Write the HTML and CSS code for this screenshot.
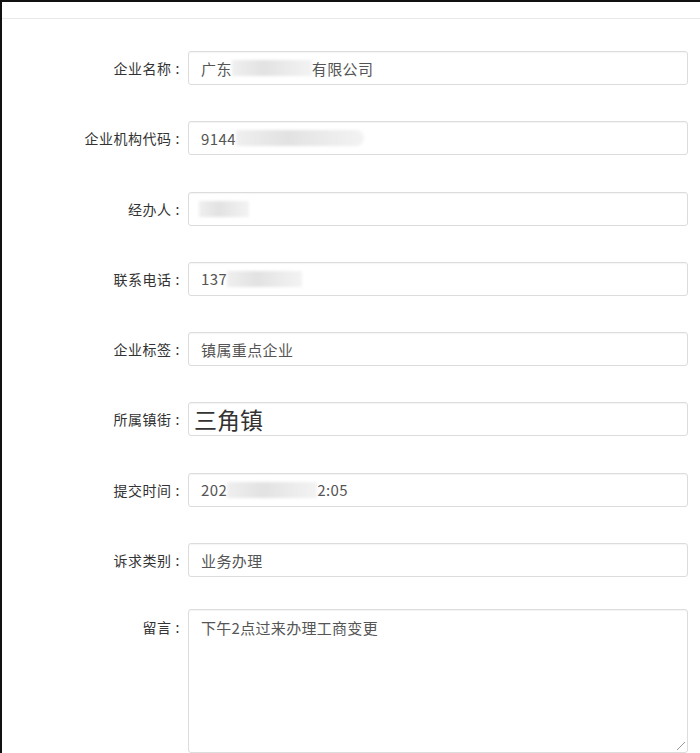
FILE: index.html
```html
<!DOCTYPE html>
<html lang="zh-CN">
<head>
<meta charset="utf-8">
<title>企业信息</title>
<link rel="stylesheet" href="styles.css">
</head>
<body>
<div class="frame">
  <div class="topbar"></div>
  <form class="form">
    <div class="row">
      <label class="label">企业名称</label>
      <div class="control">广东<span class="blur w80"></span>有限公司</div>
    </div>
    <div class="row">
      <label class="label">企业机构代码</label>
      <div class="control">9144<span class="blur w130"></span></div>
    </div>
    <div class="row">
      <label class="label">经办人</label>
      <div class="control"><span class="blur w50 lead"></span></div>
    </div>
    <div class="row">
      <label class="label">联系电话</label>
      <div class="control">137<span class="blur w75"></span></div>
    </div>
    <div class="row">
      <label class="label">企业标签</label>
      <div class="control">镇属重点企业</div>
    </div>
    <div class="row">
      <label class="label">所属镇街</label>
      <div class="control big">三角镇</div>
    </div>
    <div class="row">
      <label class="label">提交时间</label>
      <div class="control">202<span class="blur w90"></span>2:05</div>
    </div>
    <div class="row">
      <label class="label">诉求类别</label>
      <div class="control">业务办理</div>
    </div>
    <div class="row row-area">
      <label class="label">留言</label>
      <div class="control area">下午2点过来办理工商变更<span class="grip"></span></div>
    </div>
  </form>
</div>
</body>
</html>
```
FILE: styles.css
```css
* { box-sizing: border-box; }
html, body { margin: 0; padding: 0; background: #fff; }
body {
  font-family: "Noto Sans CJK SC", "Noto Sans", "Liberation Sans", sans-serif;
  font-size: 14px;
  color: #333;
}
.frame {
  width: 700px;
  height: 753px;
  border-top: 2px solid #111;
  border-left: 2px solid #111;
  overflow: hidden;
}
.topbar {
  height: 17px;
  border-bottom: 1px solid #e8e8e8;
}
.form {
  padding-top: 32px;
}
.row {
  display: flex;
  align-items: center;
  margin-bottom: 36.3px;
}
.row-area {
  margin-top: -4px;
  align-items: flex-start;
}
.label {
  width: 186px;
  text-align: right;
  padding-right: 8px;
  font-size: 14px;
  letter-spacing: 0.5px;
  color: #333;
  line-height: 20px;
}
.label::after {
  content: ":";
  margin-left: 4px;
}
.row-area .label { padding-top: 8px; }
.control {
  position: relative;
  width: 500px;
  height: 34px;
  border: 1px solid #dcdcdc;
  border-radius: 3px;
  box-shadow: inset 0 1px 1px rgba(0,0,0,0.04);
  padding: 0 12px;
  display: flex;
  align-items: center;
  color: #555;
  font-size: 15px;
  letter-spacing: 0.4px;
  white-space: nowrap;
}
.big {
  font-size: 23px;
  letter-spacing: 0;
  color: #333;
  padding-left: 5px;
}
.area {
  height: 144px;
  align-items: flex-start;
  padding-top: 7px;
  font-size: 15px;
  letter-spacing: 0.3px;
  line-height: 22px;
}
.blur {
  display: inline-block;
  height: 16px;
  background: linear-gradient(90deg, #efefef, #e2e2e2 40%, #ebebeb 70%, #f3f3f3);
  filter: blur(1.5px);
}
.w80 { width: 80px; }
.w130 { width: 128px; border-radius: 0 8px 8px 0; }
.w50 { width: 50px; }
.w75 { width: 75px; }
.w90 { width: 90px; }
.lead { margin-left: -2px; }
.grip {
  position: absolute;
  right: 2px;
  bottom: 2px;
  width: 8px;
  height: 8px;
  background: linear-gradient(135deg, transparent 45%, #999 45%, #999 55%, transparent 55%);
}
```
